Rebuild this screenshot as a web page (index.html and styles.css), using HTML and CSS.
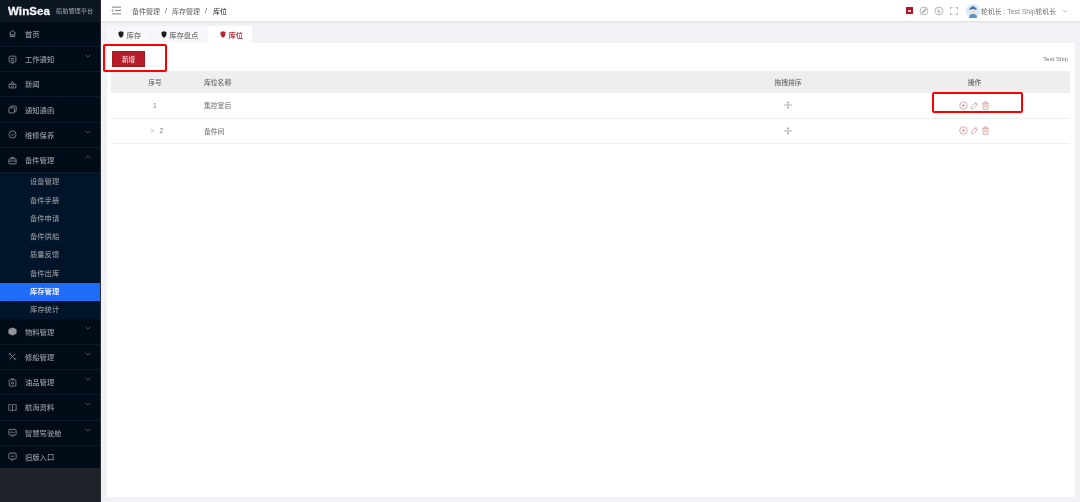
FILE: index.html
```html
<!DOCTYPE html>
<html lang="zh-CN">
<head>
<meta charset="utf-8">
<title>库位</title>
<link rel="stylesheet" href="styles.css">
</head>
<body>
<div class="app">
  <aside class="sidebar">
    <div class="brand"><span class="brand-name">WinSea</span><span class="brand-sub">船舶管理平台</span></div>
    <nav class="menu">
      <a class="item"><svg class="mi" viewBox="0 0 16 16"><path d="M2 8l6-5.500 6 5.500M4 7v6.500h8V7M6.500 13.500V10h3v3.500"/></svg><span>首页</span></a>
      <a class="item"><svg class="mi" viewBox="0 0 16 16"><rect x="2" y="2" width="12" height="10.500" rx="2"/><path d="M5 6h6M5 9h6M6 14.500h4"/></svg><span>工作通知</span><svg class="chev" viewBox="0 0 10 6"><path d="M1 1l4 4 4-4"/></svg></a>
      <a class="item"><svg class="mi" viewBox="0 0 16 16"><path d="M2 7.500h12v6.500H2zM5 7.500L8 2.500l3 5"/><path d="M5.500 11h5"/></svg><span>新闻</span></a>
      <a class="item"><svg class="mi" viewBox="0 0 16 16"><rect x="1.500" y="5" width="10" height="9" rx="1"/><path d="M5 5V2h9.500v9h-3"/></svg><span>通知通函</span></a>
      <a class="item"><svg class="mi" viewBox="0 0 16 16"><circle cx="8" cy="8" r="6.300"/><path d="M5.500 8l2 2 3-3.500"/></svg><span>维修保养</span><svg class="chev" viewBox="0 0 10 6"><path d="M1 1l4 4 4-4"/></svg></a>
      <a class="item"><svg class="mi" viewBox="0 0 16 16"><rect x="1.500" y="5" width="13" height="9" rx="1.500"/><path d="M5.500 5V2.500h5V5M1.500 9h13"/></svg><span>备件管理</span><svg class="chev" viewBox="0 0 10 6"><path d="M1 5l4-4 4 4"/></svg></a>
      <div class="submenu">
        <a class="sub">设备管理</a>
        <a class="sub">备件手册</a>
        <a class="sub">备件申请</a>
        <a class="sub">备件供船</a>
        <a class="sub">质量反馈</a>
        <a class="sub">备件出库</a>
        <a class="sub active">库存管理</a>
        <a class="sub">库存统计</a>
      </div>
      <a class="item"><svg class="mi" viewBox="0 0 16 16"><path d="M8 1.500l6.500 3v7L8 14.500l-6.500-3v-7z" fill="currentColor"/></svg><span>物料管理</span><svg class="chev" viewBox="0 0 10 6"><path d="M1 1l4 4 4-4"/></svg></a>
      <a class="item"><svg class="mi" viewBox="0 0 16 16"><path d="M3 3l10 10M13 3L3 13M1.500 5l3.500-3.500M11 14.500l3.500-3.500"/></svg><span>修船管理</span><svg class="chev" viewBox="0 0 10 6"><path d="M1 1l4 4 4-4"/></svg></a>
      <a class="item"><svg class="mi" viewBox="0 0 16 16"><rect x="2" y="3" width="12" height="11.500" rx="2"/><path d="M6 3V1.500h4V3M8 6l-2 3a2 2 0 1 0 4 0z"/></svg><span>油品管理</span><svg class="chev" viewBox="0 0 10 6"><path d="M1 1l4 4 4-4"/></svg></a>
      <a class="item"><svg class="mi" viewBox="0 0 16 16"><path d="M8 4C6.500 2.500 3.500 2.500 1.500 3v10C3.500 12.500 6.500 12.500 8 14c1.500-1.500 4.500-1.500 6.500-1V3C12.500 2.500 9.500 2.500 8 4v10"/></svg><span>航海资料</span><svg class="chev" viewBox="0 0 10 6"><path d="M1 1l4 4 4-4"/></svg></a>
      <a class="item"><svg class="mi" viewBox="0 0 16 16"><rect x="1.500" y="2.500" width="13" height="10" rx="2"/><path d="M4 8.500L7 6.500l2 2 3-2M6 14.500h4"/></svg><span>智慧驾驶舱</span><svg class="chev" viewBox="0 0 10 6"><path d="M1 1l4 4 4-4"/></svg></a>
      <a class="item last"><svg class="mi" viewBox="0 0 16 16"><rect x="1.500" y="2" width="13" height="10.500" rx="2"/><path d="M5 7.500h6M6 14.500h4"/></svg><span>旧版入口</span></a>
    </nav>
  </aside>

  <main class="main">
    <header class="topbar">
      <svg class="fold" viewBox="0 0 14 12"><path d="M1 1.500h12M5 6h8M1 10.500h12M3 4L1 6l2 2"/></svg>
      <div class="crumbs"><span>备件管理</span><i>/</i><span>库存管理</span><i>/</i><b>库位</b></div>
      <div class="tools">
        <span class="t-red"><span class="t-red-in"></span></span>
        <svg class="t-ic" viewBox="0 0 14 14"><circle cx="7" cy="7" r="5.500"/><path d="M3.500 11.500l7-9M5 8.500l3-4 1.500 1.200-3 4z"/></svg>
        <svg class="t-ic" viewBox="0 0 14 14"><circle cx="7" cy="7" r="5.500"/><path d="M4.500 7.500h5M5 5.500h3M5.500 9.500h3"/></svg>
        <svg class="t-ic" viewBox="0 0 14 14"><path d="M2 5V2h3M9 2h3v3M12 9v3H9M5 12H2V9"/></svg>
        <svg class="avatar" viewBox="0 0 16 16"><circle cx="8" cy="8" r="8" fill="#dceaf6"/><path d="M4 5l4-3 4 3v1.500H4z" fill="#3f74a8"/><circle cx="8" cy="8.500" r="2.800" fill="#f6dcc8"/><path d="M3.500 16c0-3.500 2-4.500 4.500-4.500s4.500 1 4.500 4.500z" fill="#5b93c7"/></svg>
        <span class="user">轮机长 : Test Ship轮机长</span>
        <svg class="user-chev" viewBox="0 0 10 6"><path d="M1 1l4 4 4-4"/></svg>
      </div>
    </header>

    <div class="page">
      <div class="tabs">
        <a class="tab"><svg class="pin" viewBox="0 0 8 10"><path d="M4 9.800C1.500 8.300.5 6.500.5 4V1.500L4 .3l3.500 1.200V4c0 2.500-1 4.300-3.500 5.800z"/></svg>库存</a>
        <a class="tab wide"><svg class="pin" viewBox="0 0 8 10"><path d="M4 9.800C1.500 8.300.5 6.500.5 4V1.500L4 .3l3.500 1.200V4c0 2.500-1 4.300-3.500 5.800z"/></svg>库存盘点</a>
        <a class="tab on"><svg class="pin" viewBox="0 0 8 10"><path d="M4 9.800C1.500 8.300.5 6.500.5 4V1.500L4 .3l3.500 1.200V4c0 2.500-1 4.300-3.500 5.800z"/></svg>库位</a>
      </div>
      <section class="panel">
        <div class="actions">
          <button class="add">新增</button>
          <span class="ship">Test Ship</span>
        </div>
        <table class="grid">
          <thead>
            <tr><th class="c-no">序号</th><th class="c-name">库位名称</th><th class="c-drag">拖拽排序</th><th class="c-op">操作</th></tr>
          </thead>
          <tbody>
            <tr>
              <td class="c-no">1</td><td class="c-name">集控室后</td>
              <td class="c-drag"><svg class="drag" viewBox="0 0 10 10"><path d="M5 0l2 2.500H5.600v2h4.400v1H5.600v2H7L5 10 3 7.500h1.400v-2H0v-1h4.400v-2H3z"/></svg></td>
              <td class="c-op"><span class="ops">
                <svg viewBox="0 0 10 10"><circle cx="5" cy="5" r="4.200"/><path d="M3 5h4M5 3v4"/></svg>
                <svg viewBox="0 0 10 10"><path d="M1.500 6.500L6.500 1.500l2 2-5 5h-2zM5.500 2.500l2 2"/></svg>
                <svg viewBox="0 0 10 10"><path d="M1.500 2.500h7M3.500 2.500V1h3v1.500M2.300 2.500v6.800h5.400V2.500M3.500 4.500h3M3.500 6.500h3"/></svg>
              </span></td>
            </tr>
            <tr>
              <td class="c-no"><span class="expand">&gt;</span>2</td><td class="c-name">备件间</td>
              <td class="c-drag"><svg class="drag" viewBox="0 0 10 10"><path d="M5 0l2 2.500H5.600v2h4.400v1H5.600v2H7L5 10 3 7.500h1.400v-2H0v-1h4.400v-2H3z"/></svg></td>
              <td class="c-op"><span class="ops">
                <svg viewBox="0 0 10 10"><circle cx="5" cy="5" r="4.200"/><path d="M3 5h4M5 3v4"/></svg>
                <svg viewBox="0 0 10 10"><path d="M1.500 6.500L6.500 1.500l2 2-5 5h-2zM5.500 2.500l2 2"/></svg>
                <svg viewBox="0 0 10 10"><path d="M1.500 2.500h7M3.500 2.500V1h3v1.500M2.300 2.500v6.800h5.400V2.500M3.500 4.500h3M3.500 6.500h3"/></svg>
              </span></td>
            </tr>
          </tbody>
        </table>
        <div class="mark mark-add"></div>
        <div class="mark mark-ops"></div>
      </section>
    </div>
  </main>
</div>
</body>
</html>
```
FILE: styles.css
```css
* { box-sizing: border-box; }
html, body { margin: 0; height: 100%; overflow: hidden; }
body {
  font-family: "Liberation Sans", "Noto Sans CJK SC", sans-serif;
  font-size: 7px;
  font-weight: 500;
  color: #666;
  background: #fff;
}
/* the reference is a soft, rescaled capture */
.app { display: flex; height: 502px; filter: blur(.3px); }

/* sidebar */
.sidebar {
  width: 101px;
  flex: none;
  background: #1f2229;
  border-right: 1px solid #2a2d33;
  display: flex;
  flex-direction: column;
}
.brand {
  height: 21.600px;
  background: #0b1622;
  display: flex;
  align-items: center;
  padding-left: 8px;
  gap: 6px;
}
.brand-name { font: 700 11.500px "Liberation Sans", sans-serif; color: #f4f6f8; -webkit-text-stroke: .3px #f4f6f8; letter-spacing: .1px; }
.brand-sub { font-size: 6.200px; color: #8d9299; }
.menu { background: #020c19; }
.item {
  height: 25.300px;
  display: flex;
  align-items: center;
  padding-left: 8px;
  color: #92969c;
  font-size: 7.300px;
  border-bottom: 1px solid #0d1a29;
  position: relative;
}
.item.last { height: 22px; border-bottom: 0; }
.mi {
  width: 9px;
  height: 9px;
  margin-right: 8px;
  flex: none;
  fill: none;
  stroke: currentColor;
  stroke-width: 1.400;
}
.chev {
  position: absolute;
  right: 9px;
  top: 7px;
  width: 6px;
  height: 4px;
  fill: none;
  stroke: #7f858c;
  stroke-width: 1;
}
.submenu { background: #00142a; }
.sub {
  display: block;
  height: 18.250px;
  line-height: 18px;
  padding-left: 30px;
  font-size: 7.300px;
  color: #8c9096;
}
.sub.active { background: #1f6cf6; color: #e8efff; font-weight: 700; }

/* main */
.main { flex: 1; min-width: 0; display: flex; flex-direction: column; background: #f0f2f6; }
.topbar {
  height: 21px;
  flex: none;
  background: #fff;
  display: flex;
  align-items: center;
  padding: 0 12px 0 10px;
  box-shadow: 0 1px 2px rgba(0, 0, 0, .08);
}
.fold { width: 11px; height: 9px; fill: none; stroke: #555; stroke-width: 1; margin-right: 10px; }
.crumbs { display: flex; align-items: center; gap: 5px; font-size: 7px; color: #777; }
.crumbs i { font-style: normal; color: #444; }
.crumbs b { font-weight: 500; color: #444; margin-left: 1px; }
.tools { margin-left: auto; display: flex; align-items: center; }
.t-red { width: 7px; height: 7px; background: #b3141f; display: flex; align-items: center; justify-content: center; margin-right: 6px; }
.t-red-in { width: 3px; height: 2px; background: #f6c9cc; }
.t-ic { width: 10px; height: 10px; fill: none; stroke: #9a9a9a; stroke-width: 1; margin-right: 5px; }
.avatar { width: 14px; height: 14px; margin-left: 2px; margin-right: 1px; }
.user { font-size: 6.850px; color: #888; }
.user-chev { width: 6px; height: 4px; fill: none; stroke: #999; stroke-width: 1; margin-left: 6px; }

.page { flex: 1; min-height: 0; display: flex; flex-direction: column; padding: 5px 5px 5px 6px; }
.tabs { display: flex; height: 17px; flex: none; gap: 1px; }
.tab {
  width: 43px;
  display: flex;
  align-items: center;
  justify-content: center;
  gap: 2.500px;
  padding-left: 2px;
  background: #f6f8fa;
  font-size: 7.300px;
  color: #777;
}
.tab.wide { width: 57px; padding-left: 0; }
.tab.on { background: #fff; color: #b4232f; width: 44px; margin-left: -1px; padding-left: 3px; }
.pin { width: 6px; height: 7px; fill: #1c1c1c; }
.tab.on .pin { fill: #b4232f; }

.panel { flex: 1; background: #fff; padding: 0 5px 0 4px; position: relative; }
.actions { height: 28px; display: flex; align-items: center; justify-content: space-between; padding-top: 3px; }
.add {
  width: 33px;
  height: 16px;
  margin: 0 0 0 1px;
  padding: 0;
  border: 1px solid #a81a26;
  background: #b71c2b;
  color: #f3d8da;
  font: 500 6.500px "Liberation Sans", "Noto Sans CJK SC", sans-serif;
}
.ship { font-size: 6px; color: #777; margin-right: 2px; }

.grid { width: 100%; border-collapse: collapse; table-layout: fixed; }
.grid th { height: 22px; background: #eeeeee; font-weight: 500; color: #666; font-size: 6.800px; }
.grid td { height: 25px; border-bottom: 1px solid #eeeeee; color: #808080; font-size: 6.800px; }
.c-no { width: 88px; text-align: center; }
.c-name { text-align: left; width: 498px; padding-left: 5px; }
.c-drag { text-align: center; width: 182px; }
.c-op { text-align: center; }
.expand { margin: 0 5px 0 4px; color: #aaa; }
.drag { width: 8px; height: 8px; fill: #b0b4b6; display: inline-block; vertical-align: middle; }
.ops { display: inline-flex; gap: 2px; vertical-align: middle; }
.ops svg { width: 9px; height: 9px; fill: none; stroke: #d49a95; stroke-width: .9; }

.mark { position: absolute; border: 2px solid #ff0000; border-radius: 2px; pointer-events: none; }
.mark-add { left: -4px; top: 1px; width: 64px; height: 28px; }
.mark-ops { left: 825px; top: 49px; width: 91px; height: 21px; }
```
